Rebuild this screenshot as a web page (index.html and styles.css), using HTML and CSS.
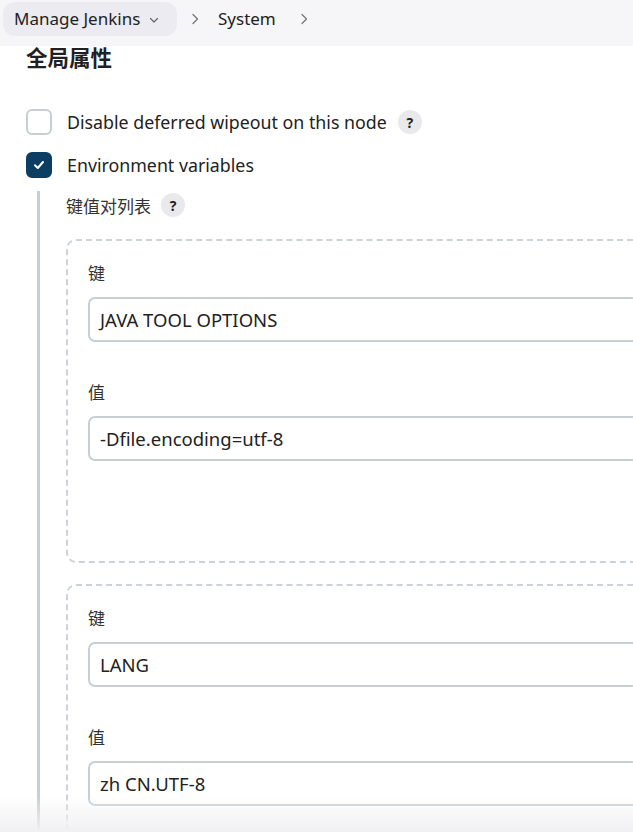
FILE: index.html
```html
<html>
<head>
  <title>System - Jenkins</title>
  <link rel="stylesheet" href="styles.css">
</head>
<body>
  <!-- Breadcrumb bar -->
  <div class="breadcrumbs">
    <div class="crumb crumb-menu">
      Manage Jenkins
      <svg class="chevron-down" width="12" height="12" viewBox="0 0 12 12"><path d="M2.5 4.5 L6 8 L9.5 4.5" fill="none" stroke="#666" stroke-width="1.2" stroke-linecap="round" stroke-linejoin="round"/></svg>
    </div>
    <svg class="sep" width="12" height="14" viewBox="0 0 12 14"><path d="M4 2.5 L8.5 7 L4 11.5" fill="none" stroke="#777" stroke-width="1.3" stroke-linecap="round" stroke-linejoin="round"/></svg>
    <div class="crumb">System</div>
    <svg class="sep" width="12" height="14" viewBox="0 0 12 14"><path d="M4 2.5 L8.5 7 L4 11.5" fill="none" stroke="#777" stroke-width="1.3" stroke-linecap="round" stroke-linejoin="round"/></svg>
  </div>

  <div class="main">
    <h2 class="section-title">全局属性</h2>

    <div class="option">
      <span class="checkbox"></span>
      <span class="option-label">Disable deferred wipeout on this node</span>
      <span class="help">?</span>
    </div>

    <div class="option">
      <span class="checkbox checked">
        <svg width="14" height="14" viewBox="0 0 14 14"><path d="M3 7.3 L5.8 10 L11 4" fill="none" stroke="#fff" stroke-width="2" stroke-linecap="round" stroke-linejoin="round"/></svg>
      </span>
      <span class="option-label">Environment variables</span>
    </div>

    <!-- Nested settings for environment variables -->
    <div class="nested">
      <div class="list-title">
        <span>键值对列表</span>
        <span class="help">?</span>
      </div>

      <div class="repeated">
        <div class="field">
          <div class="field-label">键</div>
          <div class="input">JAVA TOOL OPTIONS</div>
        </div>
        <div class="field">
          <div class="field-label">值</div>
          <div class="input">-Dfile.encoding=utf-8</div>
        </div>
      </div>

      <div class="repeated">
        <div class="field">
          <div class="field-label">键</div>
          <div class="input">LANG</div>
        </div>
        <div class="field">
          <div class="field-label">值</div>
          <div class="input">zh CN.UTF-8</div>
        </div>
      </div>
    </div>
  </div>

  <div class="bottom-fade"></div>
</body>
</html>
```

FILE: styles.css
```css
/* Jenkins style configuration page */
body {
  margin: 0;
  overflow: hidden;
  background-color: white;
  color: #1f1f24;
  font-family: "Noto Sans", "Noto Sans CJK SC", sans-serif;
  font-size: 16px;
}
.breadcrumbs {
  display: flex;
  align-items: center;
  height: 46px;
  padding: 0 0 9px 3px;
  box-sizing: border-box;
  background-color: #f6f6f8;
}
.crumb {
  display: flex;
  align-items: center;
  height: 34px;
  padding: 0 10px;
  font-size: 17px;
  color: #222;
}
.crumb-menu {
  width: 174px;
  box-sizing: border-box;
  padding: 0 12px 0 11px;
  gap: 8px;
  background-color: #ebebf1;
  border-radius: 12px;
}
.chevron-down {
  margin-top: 2px;
}
.sep {
  margin: 0 4px 0 12px;
}
.sep + .crumb {
  padding-left: 13px;
}
.main {
  width: 700px;
  padding: 0 0 0 26px;
}
.section-title {
  margin: -1px 0 38px 0;
  font-size: 21.5px;
  font-weight: bold;
  line-height: 26px;
}
.option {
  display: flex;
  align-items: center;
  height: 26px;
  margin-bottom: 17px;
}
.checkbox {
  display: flex;
  align-items: center;
  justify-content: center;
  width: 26px;
  height: 26px;
  box-sizing: border-box;
  border: 2px solid #c8cfd4;
  border-radius: 6px;
}
.checkbox.checked {
  background-color: #0b3e62;
  border-color: #0b3e62;
}
.option-label {
  margin-left: 15px;
  font-size: 17.8px;
  color: #222;
}
.help {
  display: inline-flex;
  align-items: center;
  justify-content: center;
  width: 24px;
  height: 24px;
  margin-left: 11px;
  border-radius: 50%;
  background-color: #e9e9ec;
  font-size: 14px;
  font-weight: bold;
  color: #222;
}
.nested {
  margin-left: 11px;
  padding: 0 0 0 26px;
  border-left: 3px solid #c8cfd4;
  margin-top: -4px;
}
.list-title {
  display: flex;
  align-items: center;
  height: 28px;
  font-size: 17px;
  color: #333;
}
.list-title .help {
  margin-left: 10px;
}
.repeated {
  margin-top: 20px;
  padding: 21px 0 100px 20px;
  border: 2px dashed #ccd2d7;
  border-radius: 10px;
  margin-bottom: 3px;
}
.repeated + .repeated {
  margin-top: 21px;
}
.field {
  margin-bottom: 39px;
}
.field:last-child {
  margin-bottom: 0;
}
.field-label {
  height: 24px;
  line-height: 24px;
  margin-bottom: 11px;
  font-size: 17px;
  color: #333;
}
.input {
  height: 45px;
  box-sizing: border-box;
  padding: 0 10px;
  line-height: 41px;
  border: 2px solid #c8cfd4;
  border-radius: 7px;
  font-size: 18.5px;
  color: #222;
}
.bottom-fade {
  position: fixed;
  left: 0;
  right: 0;
  bottom: 0;
  height: 36px;
  background: linear-gradient(to bottom, rgba(240, 240, 242, 0), rgba(240, 240, 242, 1));
}
```
